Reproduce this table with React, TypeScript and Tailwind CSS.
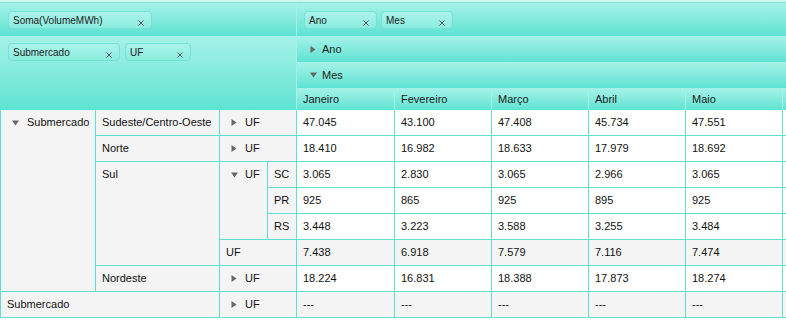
import React from "react";

const months = ["Janeiro", "Fevereiro", "Março", "Abril", "Maio"];

const values: { cells: string[]; total?: boolean }[] = [
  { cells: ["47.045", "43.100", "47.408", "45.734", "47.551"] },
  { cells: ["18.410", "16.982", "18.633", "17.979", "18.692"] },
  { cells: ["3.065", "2.830", "3.065", "2.966", "3.065"] },
  { cells: ["925", "865", "925", "895", "925"] },
  { cells: ["3.448", "3.223", "3.588", "3.255", "3.484"] },
  { cells: ["7.438", "6.918", "7.579", "7.116", "7.474"], total: true },
  { cells: ["18.224", "16.831", "18.388", "17.873", "18.274"] },
  { cells: ["---", "---", "---", "---", "---"], total: true },
];

// header bands share one gradient
const band = "bg-gradient-to-b from-[#a5f2e9] to-[#5be3d2]";
const cell = "border-r border-b border-[#5fe0d0] bg-[#f4f4f4] leading-[25px] whitespace-nowrap";

function Caret({ open }: { open?: boolean }) {
  return open ? (
    <svg width="7" height="6" viewBox="0 0 7 6" className="shrink-0">
      <path d="M0 0.5h7L3.5 5.5z" fill="#666" />
    </svg>
  ) : (
    <svg width="6" height="7" viewBox="0 0 6 7" className="shrink-0">
      <path d="M0.5 0v7L5.5 3.5z" fill="#666" />
    </svg>
  );
}

function Pill({ label, width }: { label: string; width: string }) {
  return (
    <div
      className={`${width} h-[18px] flex items-center justify-between pl-[4px] pr-[7px] rounded-[4px] border border-[#74e2d5] bg-gradient-to-b from-[#aaf3eb] to-[#8beddf] text-[10px] text-[#222]`}
    >
      <span>{label}</span>
      <svg width="6" height="6" viewBox="0 0 6 6" className="mt-[5px] shrink-0">
        <path d="M0.5 0.5L5.5 5.5M5.5 0.5L0.5 5.5" stroke="#555" strokeWidth="1" />
      </svg>
    </div>
  );
}

export default function App() {
  return (
    <div className="w-[786px] h-[320px] overflow-hidden bg-white font-['Liberation_Sans',Arial,sans-serif] text-[11px] text-[#111]">
      <div className="h-[3px] bg-[#cdf6f0] border-b border-[#93dcd2]" />

      {/* header */}
      <div className="flex">
        <div className="w-[297px] shrink-0 flex flex-col border-r border-[#a9f1e8]">
          <div className={`h-[33px] pl-[8px] pt-[8px] ${band}`}>
            <Pill label="Soma(VolumeMWh)" width="w-[144px]" />
          </div>
          <div className={`h-[74px] pl-[8px] pt-[7px] flex gap-[5px] items-start ${band}`}>
            <Pill label="Submercado" width="w-[112px]" />
            <Pill label="UF" width="w-[66px]" />
          </div>
        </div>
        <div className="flex-1 flex flex-col">
          <div className={`h-[33px] pl-[7px] pt-[8px] flex gap-[4px] items-start ${band}`}>
            <Pill label="Ano" width="w-[73px]" />
            <Pill label="Mes" width="w-[72px]" />
          </div>
          <div className={`h-[26px] pl-[13px] flex items-center gap-[6px] text-[#222] ${band}`}>
            <Caret />
            <span>Ano</span>
          </div>
          <div className={`h-[26px] pl-[13px] flex items-center gap-[5px] text-[#222] ${band}`}>
            <Caret open />
            <span>Mes</span>
          </div>
          <div className={`h-[22px] grid grid-cols-[98px_97px_97px_97px_97px_1fr] ${band}`}>
            {months.map((m) => (
              <div key={m} className="border-r border-[#a9f1e8] pl-[6px] leading-[22px] text-[#1a1a1a]">
                {m}
              </div>
            ))}
            <div />
          </div>
        </div>
      </div>

      {/* body */}
      <div className="flex">
        <div className="w-[297px] shrink-0 grid grid-cols-[96px_124px_48px_29px] grid-rows-[repeat(8,26px)]">
          <div className={`${cell} border-l col-start-1 row-start-1 row-span-7 pl-[11px] flex items-start gap-[8px]`}>
            <span className="h-[25px] flex items-center"><Caret open /></span>
            <span>Submercado</span>
          </div>

          <div className={`${cell} col-start-2 row-start-1 pl-[6px]`}>Sudeste/Centro-Oeste</div>
          <div className={`${cell} col-start-3 col-span-2 row-start-1 pl-[11px] flex items-center gap-[8px]`}>
            <Caret />
            <span>UF</span>
          </div>

          <div className={`${cell} col-start-2 row-start-2 pl-[6px]`}>Norte</div>
          <div className={`${cell} col-start-3 col-span-2 row-start-2 pl-[11px] flex items-center gap-[8px]`}>
            <Caret />
            <span>UF</span>
          </div>

          <div className={`${cell} col-start-2 row-start-3 row-span-4 pl-[6px]`}>Sul</div>
          <div className={`${cell} col-start-3 row-start-3 row-span-3 pl-[11px] flex items-start gap-[7px]`}>
            <span className="h-[25px] flex items-center"><Caret open /></span>
            <span>UF</span>
          </div>
          <div className={`${cell} col-start-4 row-start-3 pl-[6px]`}>SC</div>
          <div className={`${cell} col-start-4 row-start-4 pl-[6px]`}>PR</div>
          <div className={`${cell} col-start-4 row-start-5 pl-[6px]`}>RS</div>
          <div className={`${cell} col-start-3 col-span-2 row-start-6 pl-[6px]`}>UF</div>

          <div className={`${cell} col-start-2 row-start-7 pl-[6px]`}>Nordeste</div>
          <div className={`${cell} col-start-3 col-span-2 row-start-7 pl-[11px] flex items-center gap-[8px]`}>
            <Caret />
            <span>UF</span>
          </div>

          <div className={`${cell} border-l col-start-1 col-span-2 row-start-8 pl-[6px]`}>Submercado</div>
          <div className={`${cell} col-start-3 col-span-2 row-start-8 pl-[11px] flex items-center gap-[8px]`}>
            <Caret />
            <span>UF</span>
          </div>
        </div>

        <div className="flex-1 grid grid-cols-[98px_97px_97px_97px_97px_1fr] grid-rows-[repeat(8,26px)]">
          {values.map((row, i) => (
            <React.Fragment key={i}>
              {row.cells.map((v, j) => (
                <div
                  key={j}
                  className={`border-r border-b border-[#5fe0d0] pl-[6px] leading-[25px] ${row.total ? "bg-[#f4f4f4]" : "bg-white"}`}
                >
                  {v}
                </div>
              ))}
              <div className={`border-b border-[#5fe0d0] ${row.total ? "bg-[#f4f4f4]" : "bg-white"}`} />
            </React.Fragment>
          ))}
        </div>
      </div>
    </div>
  );
}
